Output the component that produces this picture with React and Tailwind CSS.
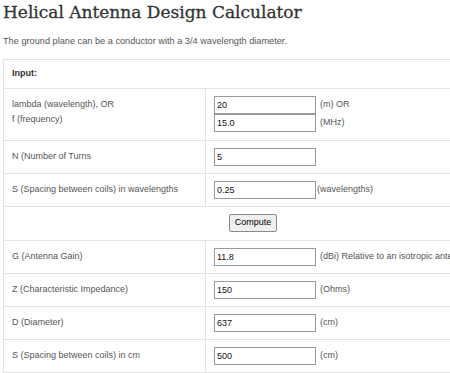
import React from "react";

const inputRows = [
  { label: "N (Number of Turns", value: "5", unit: "" },
  { label: "S (Spacing between coils) in wavelengths", value: "0.25", unit: "(wavelengths)", tight: true },
];

const outputRows = [
  { label: "G (Antenna Gain)", value: "11.8", unit: "(dBi) Relative to an isotropic antenna" },
  { label: "Z (Characteristic Impedance)", value: "150", unit: "(Ohms)" },
  { label: "D (Diameter)", value: "637", unit: "(cm)" },
  { label: "S (Spacing between coils) in cm", value: "500", unit: "(cm)" },
];

function Field({ value, unit, tight }) {
  return (
    <div className="flex items-center h-[18px] whitespace-nowrap">
      <input
        readOnly
        value={value}
        className="w-[102px] h-[18px] border border-[#9a9a9a] bg-white px-[2px] text-[9px] text-[#111] outline-none"
      />
      {unit && <span className={tight ? "ml-[1px]" : "ml-[4px]"}>{unit}</span>}
    </div>
  );
}

function Row({ label, value, unit, tight }) {
  return (
    <tr className="h-[33px]">
      <td className="w-[202px] align-top border border-[#e3e3e3] px-[8px] pt-[8px] leading-[15px]">{label}</td>
      <td className="align-top border border-[#e3e3e3] px-[8px] pt-[7px]">
        <Field value={value} unit={unit} tight={tight} />
      </td>
    </tr>
  );
}

export default function App() {
  return (
    <div className="w-[450px] h-[373px] overflow-hidden bg-white pl-[3px] font-['Liberation_Sans',Arial,sans-serif] text-[9px] text-[#555]">
      <h1 className="font-['DejaVu_Serif',serif] text-[17px] font-normal leading-[24px] text-[#333] whitespace-nowrap [-webkit-text-stroke:0.3px_#333]">
        Helical Antenna Design Calculator
      </h1>
      <p className="mt-[11px] text-[9.2px] leading-[13px] text-[#555] whitespace-nowrap">
        The ground plane can be a conductor with a 3/4 wavelength diameter.
      </p>
      <table className="mt-[11px] w-[500px] border-collapse">
        <tbody>
          <tr className="h-[29px]">
            <td colSpan={2} className="border border-[#e3e3e3] px-[8px] align-middle font-bold text-[#333]">
              Input:
            </td>
          </tr>
          <tr className="h-[52px]">
            <td className="w-[202px] align-top border border-[#e3e3e3] px-[8px] pt-[8px] leading-[15px]">
              lambda (wavelength), OR
              <br />
              f (frequency)
            </td>
            <td className="align-top border border-[#e3e3e3] px-[8px] pt-[7px]">
              <Field value="20" unit="(m) OR" />
              <Field value="15.0" unit="(MHz)" />
            </td>
          </tr>
          {inputRows.map((r) => (
            <Row key={r.label} {...r} />
          ))}
          <tr className="h-[34px]">
            <td colSpan={2} className="border border-[#e3e3e3] text-center align-top pt-[7px]">
              <button className="h-[18px] px-[5px] bg-[#efefef] border border-[#8a8a8a] rounded-[2px] text-[9px] text-black">
                Compute
              </button>
            </td>
          </tr>
          {outputRows.map((r) => (
            <Row key={r.label} {...r} />
          ))}
        </tbody>
      </table>
    </div>
  );
}
